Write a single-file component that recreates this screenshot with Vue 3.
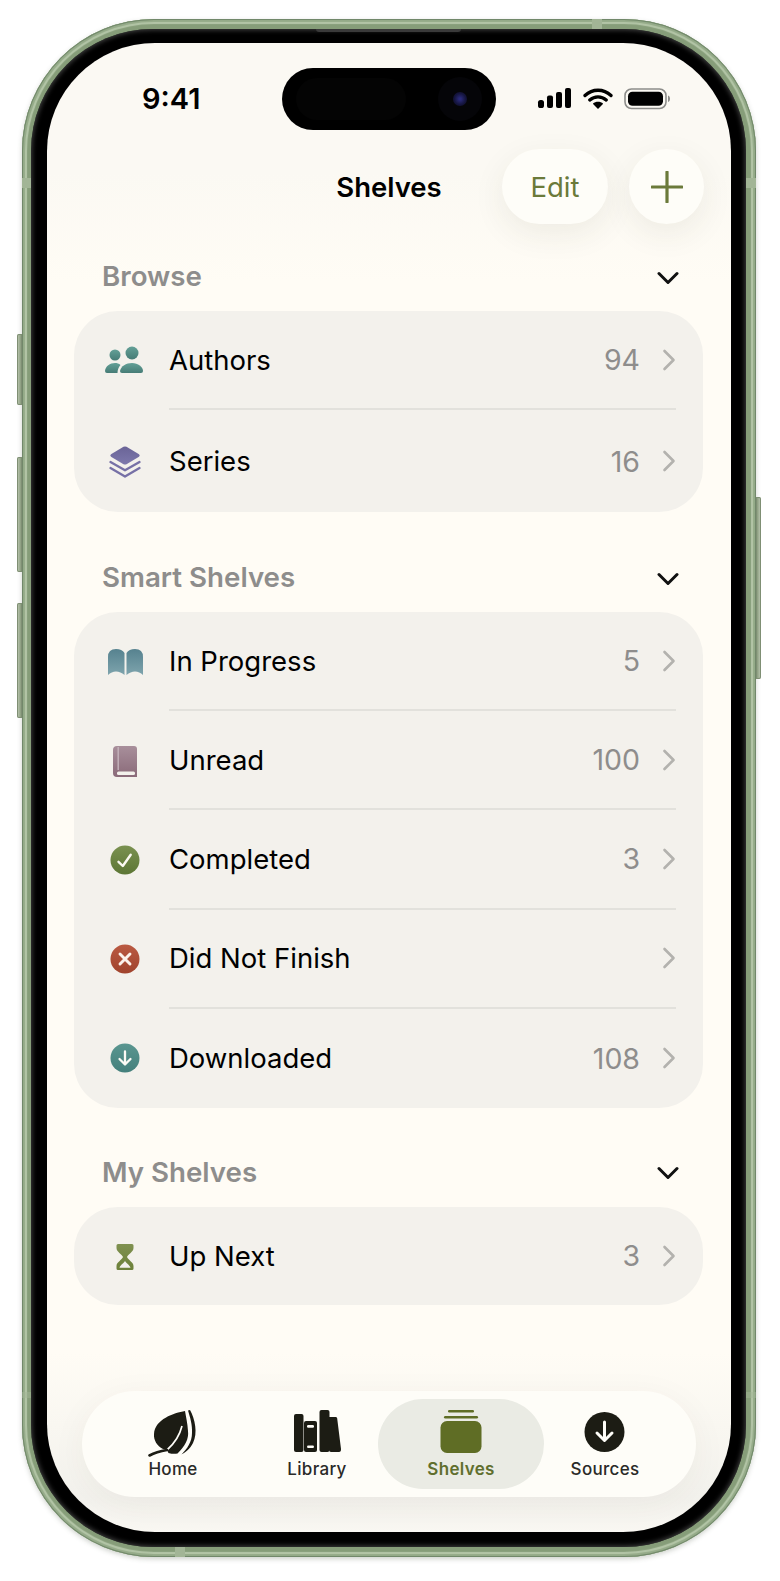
<script setup>
const sections = [
  { title: 'Browse', tall: true, rows: [
    { icon: 'authors', label: 'Authors', count: '94' },
    { icon: 'series', label: 'Series', count: '16' },
  ]},
  { title: 'Smart Shelves', rows: [
    { icon: 'progress', label: 'In Progress', count: '5' },
    { icon: 'unread', label: 'Unread', count: '100' },
    { icon: 'completed', label: 'Completed', count: '3' },
    { icon: 'dnf', label: 'Did Not Finish', count: '' },
    { icon: 'downloaded', label: 'Downloaded', count: '108' },
  ]},
  { title: 'My Shelves', rows: [
    { icon: 'next', label: 'Up Next', count: '3' },
  ]},
]
</script>

<template>
  <div class="page">
    <div class="frame">
      <i class="btn b1"></i><i class="btn b2"></i><i class="btn b3"></i><i class="btn b4"></i>
      <i class="band top"></i><i class="band bot"></i><i class="band lft"></i><i class="band rgt"></i>
      <i class="band lft2"></i><i class="band rgt2"></i>
      <div class="bezel">
        <i class="speaker"></i>
        <div class="screen">
          <svg width="0" height="0" class="defs">
            <defs>
              <linearGradient id="gTeal" x1="0" y1="0" x2="0" y2="1"><stop offset="0" stop-color="#63a097"/><stop offset="1" stop-color="#467c76"/></linearGradient>
              <linearGradient id="gPurple" x1="0" y1="0" x2="0" y2="1"><stop offset="0" stop-color="#6a6497"/><stop offset="1" stop-color="#7d78ac"/></linearGradient>
              <linearGradient id="gBlue" x1="0" y1="0" x2="0" y2="1"><stop offset="0" stop-color="#56828f"/><stop offset="1" stop-color="#7ea4ad"/></linearGradient>
              <linearGradient id="gMauve" x1="0" y1="0" x2="0" y2="1"><stop offset="0" stop-color="#a88f9b"/><stop offset="1" stop-color="#8a6a79"/></linearGradient>
              <linearGradient id="gGreen" x1="0" y1="0" x2="0" y2="1"><stop offset="0" stop-color="#7a9150"/><stop offset="1" stop-color="#5c7635"/></linearGradient>
              <linearGradient id="gRed" x1="0" y1="0" x2="0" y2="1"><stop offset="0" stop-color="#ba5a42"/><stop offset="1" stop-color="#a0432d"/></linearGradient>
              <linearGradient id="gSea" x1="0" y1="0" x2="0" y2="1"><stop offset="0" stop-color="#5a9690"/><stop offset="1" stop-color="#44807c"/></linearGradient>
              <linearGradient id="gOlive" x1="0" y1="0" x2="0" y2="1"><stop offset="0" stop-color="#7f9150"/><stop offset="1" stop-color="#6c8039"/></linearGradient>
            </defs>
          </svg>

          <div class="island">
            <i class="ghost"></i>
            <i class="lens"><i class="pupil"></i></i>
          </div>

          <div class="status">
            <span class="time">9:41</span>
            <div class="indicators">
              <svg width="35" height="22" viewBox="0 0 35 22" fill="#000">
                <rect x="1" y="12" width="6" height="8" rx="2.6"/>
                <rect x="10" y="7.5" width="6" height="12.500" rx="2"/>
                <rect x="19" y="4" width="6" height="16" rx="2"/>
                <rect x="28" y="0" width="6" height="20" rx="2"/>
              </svg>
              <svg width="30" height="22" viewBox="0 0 30 22">
                <path d="M2 7.500C9.500 0.500 20.500 0.500 28 7.500M6.800 12C11.500 7.800 18.500 7.800 23.200 12" fill="none" stroke="#000" stroke-width="3.300" stroke-linecap="round"/>
                <path d="M15 21L9.800 15.800C12.800 13.200 17.200 13.200 20.200 15.800Z" fill="#000"/>
              </svg>
              <svg width="47" height="22" viewBox="0 0 47 22">
                <rect x="1" y="1" width="41" height="19.500" rx="6.500" fill="none" stroke="#8d8d8a" stroke-width="1.600"/>
                <rect x="4" y="3.800" width="35" height="14" rx="4.500" fill="#000"/>
                <path d="M44 7.500C45.500 8 46 9.200 46 10.700S45.500 13.500 44 14Z" fill="#8d8d8a"/>
              </svg>
            </div>
          </div>

          <header class="nav">
            <span></span>
            <h1 class="title">Shelves</h1>
            <div class="actions">
              <button class="pill edit">Edit</button>
              <button class="pill add" aria-label="Add">
                <svg width="32" height="32" viewBox="0 0 32 32"><path d="M16 1V31M1 16H31" stroke="#6b7a3a" stroke-width="3.200" stroke-linecap="round"/></svg>
              </button>
            </div>
          </header>

          <section v-for="s in sections" :key="s.title" class="section">
            <div class="sec-head">
              <h2>{{ s.title }}</h2>
              <svg class="sec-chev" width="22" height="14" viewBox="0 0 22 14"><path d="M2 2.500L11 11.500L20 2.500" fill="none" stroke="#111" stroke-width="3" stroke-linecap="round" stroke-linejoin="round"/></svg>
            </div>
            <div class="card" :class="{ tall: s.tall }">
              <div v-for="r in s.rows" :key="r.label" class="row">
                <svg class="ico" width="46" height="46" viewBox="0 0 46 46">
                  <g v-if="r.icon === 'authors'" fill="url(#gTeal)">
                    <circle cx="13" cy="17" r="5.500"/>
                    <circle cx="30" cy="15" r="6.500"/>
                    <path d="M3 33C3.500 28 8 25 13 25C15 25 17 25.500 18.500 27C16.500 29 15.500 32 15.500 35H5Q3 35 3 33Z"/>
                    <path d="M18 33C19 28 24 25 30 25C36 25 41 29 41 33Q41 35 39 35H20Q18 35 18 33Z"/>
                  </g>
                  <g v-else-if="r.icon === 'series'">
                    <path d="M21.500 8.800Q23 8 24.500 8.800L37 16.300Q38.500 17.500 37 18.700L24.500 26.200Q23 27 21.500 26.200L9 18.700Q7.500 17.500 9 16.300Z" fill="url(#gPurple)"/>
                    <path d="M8.500 24L23 32.300L37.500 24M8.500 30L23 38.500L37.500 30" fill="none" stroke="#7670a6" stroke-width="2.300" stroke-linecap="round" stroke-linejoin="round"/>
                  </g>
                  <g v-else-if="r.icon === 'progress'" fill="url(#gBlue)">
                    <path d="M6 36V18Q6 10 14 10Q20 10 22.500 14V36Q18.500 32.500 14 32.500Q9.500 32.500 6 36Z"/>
                    <path d="M41 36V18Q41 10 33 10Q27 10 24.500 14V36Q28.500 32.500 33 32.500Q37.500 32.500 41 36Z"/>
                  </g>
                  <g v-else-if="r.icon === 'unread'">
                    <path d="M15 8H32Q35 8 35 11V39H15Q11 39 11 35V12Q11 8 15 8Z" fill="url(#gMauve)"/>
                    <rect x="15" y="33.500" width="18" height="3.400" rx="1.500" fill="#f3f1ec"/>
                    <rect x="15.500" y="9" width="1.400" height="23" fill="#c5b3bc"/>
                  </g>
                  <g v-else-if="r.icon === 'completed'">
                    <circle cx="23" cy="23" r="14.500" fill="url(#gGreen)"/>
                    <path d="M16.500 24.800L20.800 29L28.700 17.800" fill="none" stroke="#fbf9f2" stroke-width="2.400" stroke-linecap="round" stroke-linejoin="round"/>
                  </g>
                  <g v-else-if="r.icon === 'dnf'">
                    <circle cx="23" cy="23" r="14.500" fill="url(#gRed)"/>
                    <path d="M18 18L28 28M28 18L18 28" fill="none" stroke="#fbf2ec" stroke-width="2.900" stroke-linecap="round"/>
                  </g>
                  <g v-else-if="r.icon === 'downloaded'">
                    <circle cx="23" cy="23" r="14.500" fill="url(#gSea)"/>
                    <path d="M23 16.500V29M17.500 24L23 29.500L28.500 24" fill="none" stroke="#fbfaf5" stroke-width="2.300" stroke-linecap="round" stroke-linejoin="round"/>
                  </g>
                  <g v-else-if="r.icon === 'next'">
                    <path d="M16 11H30Q31.500 11 31.500 12.500V15C31.500 19 26 21 25 24C26 27 31.500 29 31.500 33V35.500Q31.500 37 30 37H16Q14.500 37 14.500 35.500V33C14.500 29 20 27 21 24C20 21 14.500 19 14.500 15V12.500Q14.500 11 16 11Z" fill="url(#gOlive)"/>
                    <path d="M17.500 34.800C18.500 31.500 22 30.500 23 27.800C24 30.500 27.500 31.500 28.500 34.800Z" fill="#f3f1ec"/>
                  </g>
                </svg>
                <div class="row-main">
                  <span class="label">{{ r.label }}</span>
                  <span class="count">{{ r.count }}</span>
                  <svg class="chev" width="14" height="22" viewBox="0 0 14 22"><path d="M2.500 2L11.500 11L2.500 20" fill="none" stroke="#b3b2ae" stroke-width="2.600" stroke-linecap="round" stroke-linejoin="round"/></svg>
                </div>
              </div>
            </div>
          </section>

          <nav class="tabbar">
            <div class="tab">
              <svg width="50" height="48" viewBox="0 0 50 48">
                <path d="M37 2C26 4 7 10 6 25C5.500 31 9 37 15 40L19 41L20.500 44C24 45 27 45 29.500 44.500C37 37 41 30 40 22C39.500 14 38 8 37 2Z" fill="#1c1c14"/>
                <path d="M34 17C32 25 27 34 19 41" fill="none" stroke="#fefdf8" stroke-width="1.700"/>
                <path d="M19 41C13 42 7 43.500 1.500 46.500" fill="none" stroke="#1c1c14" stroke-width="2.600" stroke-linecap="round"/>
                <path d="M42 1C47 10 50 24 45 34C42 40 38 43 33.500 45.500C39 40 44 33 44 24C44.500 16 42 8 40 1.500Z" fill="#1c1c14"/>
              </svg>
              <span>Home</span>
            </div>
            <div class="tab">
              <svg width="50" height="48" viewBox="0 0 50 48" fill="#1c1c14">
                <rect x="2" y="5" width="9.500" height="38" rx="2"/>
                <path d="M14 12H23Q25 12 25 14V41Q25 43 23 43H14Q12 43 12 41V14Q12 12 14 12Z"/>
                <rect x="15" y="16" width="7" height="2.800" rx="1.200" fill="#fefdf8"/>
                <rect x="15" y="36.500" width="7" height="2.400" rx="1.200" fill="#fefdf8"/>
                <rect x="27.500" y="1" width="10" height="42" rx="2"/>
                <path d="M37 8H44Q45 8 45.200 9.500L49 40Q49.200 43 47 43H39Q37 43 37 41Z"/>
              </svg>
              <span>Library</span>
            </div>
            <div class="tab active">
              <svg width="50" height="48" viewBox="0 0 50 48" fill="#5f6d25">
                <rect x="12" y="1" width="26" height="2.400" rx="1.200"/>
                <rect x="8" y="7" width="34" height="2.600" rx="1.300"/>
                <rect x="4.500" y="12" width="41" height="32" rx="6.500"/>
              </svg>
              <span>Shelves</span>
            </div>
            <div class="tab">
              <svg width="50" height="48" viewBox="0 0 50 48">
                <circle cx="24.500" cy="23" r="20" fill="#1c1c14"/>
                <path d="M24.500 13V31M17 24L24.500 31.500L32 24" fill="none" stroke="#fefdf8" stroke-width="3" stroke-linecap="round" stroke-linejoin="round"/>
              </svg>
              <span>Sources</span>
            </div>
          </nav>
        </div>
      </div>
    </div>
  </div>
</template>

<style>
html, body { margin: 0; background: #fff; }
</style>

<style scoped>
.page {
  width: 780px;
  height: 1581px;
  padding: 19px 0 0 22px;
  box-sizing: border-box;
  overflow: hidden;
  font-family: Inter, "Liberation Sans", sans-serif;
}
.frame {
  position: relative;
  width: 734px;
  height: 1538px;
  box-sizing: border-box;
  padding: 10px 10px 10px 9px;
  border-radius: 132px;
  background: #869d79;
  box-shadow:
    inset 0 0 0 1px #71886a,
    inset 0 0 1px 3px #94aa88,
    inset 0 0 1px 5px #b5c7a9,
    0 2px 5px rgba(60, 70, 50, .25);
}
.btn {
  position: absolute;
  width: 5px;
  background: linear-gradient(to right, #c3ccb8, #7c9170);
  border-radius: 2px 0 0 2px;
  box-shadow: inset 0 0 0 1px #7f8f74;
}
.b1 { left: -5px; top: 315px; height: 71px; }
.b2 { left: -5px; top: 438px; height: 115px; }
.b3 { left: -5px; top: 584px; height: 115px; }
.b4 {
  left: auto; right: -5px; top: 478px; height: 182px;
  border-radius: 0 2px 2px 0;
  background: linear-gradient(to left, #c3ccb8, #7c9170);
}
.band { position: absolute; background: #a2b596; }
.band.top { left: 570px; top: 0; width: 10px; height: 10px; }
.band.bot { left: 153px; bottom: 0; width: 10px; height: 10px; }
.band.lft { left: 0; top: 159px; width: 9px; height: 10px; }
.band.rgt { right: 0; top: 159px; width: 10px; height: 10px; }
.band.lft2 { left: 0; top: 1373px; width: 9px; height: 6px; opacity: .5; }
.band.rgt2 { right: 0; top: 1373px; width: 10px; height: 6px; opacity: .5; }
.bezel {
  position: relative;
  height: 100%;
  box-sizing: border-box;
  padding: 14px 15px 15px 16px;
  border-radius: 122px;
  background: #000;
  box-shadow: inset 0 0 5px 1px #444;
}
.speaker {
  position: absolute;
  left: 285px;
  top: 0;
  width: 145px;
  height: 3px;
  background: #3a3a3a;
  border-radius: 0 0 3px 3px;
}
.screen {
  position: relative;
  height: 100%;
  display: flex;
  flex-direction: column;
  overflow: hidden;
  border-radius: 108px;
  background:
    linear-gradient(to bottom, rgba(244, 243, 238, 0) 1310px, #f3f2ed 1455px, #faf8f3 1489px),
    linear-gradient(to bottom, #fbf9f3 130px, #fffcf5 240px);
}
.defs { position: absolute; }
.island {
  position: absolute;
  left: 235px;
  top: 24.500px;
  width: 214px;
  height: 62.500px;
  border-radius: 32px;
  background: #000;
}
.ghost {
  position: absolute;
  left: 14px;
  top: 10px;
  width: 110px;
  height: 42px;
  border-radius: 21px;
  background: #040404;
}
.lens {
  position: absolute;
  left: 156px;
  top: 9px;
  width: 44px;
  height: 44px;
  border-radius: 50%;
  background: #050508;
}
.pupil {
  position: absolute;
  left: 15px;
  top: 15px;
  width: 14px;
  height: 14px;
  border-radius: 50%;
  background: radial-gradient(circle, #2a2a78 10%, #15153f 55%, #0a0a1a 100%);
}
.status {
  height: 106px;
  box-sizing: border-box;
  padding: 41px 60px 0 95px;
  display: flex;
  justify-content: space-between;
  align-items: flex-start;
}
.time {
  font-size: 29px;
  line-height: 30px;
  font-weight: 600;
  color: #000;
}
.indicators { display: flex; align-items: center; gap: 11px; margin-top: 4px; }
.nav {
  height: 75px;
  padding: 0 27px;
  display: grid;
  grid-template-columns: 1fr auto 1fr;
  align-items: center;
}
.title {
  margin: 0;
  font-size: 27.500px;
  font-weight: 600;
  color: #000;
}
.actions { display: flex; justify-content: flex-end; gap: 21px; }
.pill {
  height: 75px;
  border: 0;
  padding: 0;
  border-radius: 38px;
  background: #fefdf8;
  box-shadow: 0 10px 32px rgba(70, 60, 40, .08);
  display: flex;
  align-items: center;
  justify-content: center;
  font-family: inherit;
}
.edit { width: 106px; font-size: 27.500px; font-weight: 400; color: #6b7a3a; }
.add { width: 75px; }
.section { padding: 0 28px 0 27px; margin-top: 45px; }
.nav + .section { margin-top: 32px; }
.section:last-of-type { margin-top: 44px; }
.sec-head {
  height: 40px;
  margin-bottom: 15px;
  padding: 0 24px 0 28px;
  display: flex;
  align-items: center;
  justify-content: space-between;
}
.sec-head h2 {
  margin: 0;
  font-size: 27.700px;
  font-weight: 600;
  color: #8e8d8c;
}
.sec-chev { margin-top: 3px; }
.card {
  border-radius: 44px;
  background: #f3f1ec;
}
.row {
  height: 99.200px;
  padding: 0 27px 0 28px;
  display: flex;
  align-items: center;
  gap: 21px;
}
.tall .row:first-child { height: 99px; }
.tall .row:last-child { height: 102px; }
.section:last-of-type .row { height: 98px; }
.ico { flex: none; }
.row-main {
  flex: 1;
  height: 100%;
  display: flex;
  align-items: center;
  border-bottom: 2px solid #e2e1dc;
  box-sizing: border-box;
}
.row:last-child .row-main { border-bottom: 0; }
.label { flex: 1; font-size: 27.500px; color: #000; }
.count {
  font-size: 28.500px;
  color: #8e8d8c;
  margin-right: 22px;
}
.chev { flex: none; }
.tabbar {
  position: absolute;
  left: 35px;
  right: 35px;
  bottom: 35px;
  height: 106px;
  box-sizing: border-box;
  padding: 0 18px 0 19px;
  border-radius: 53px;
  background: #fefdf8;
  display: grid;
  grid-template-columns: repeat(4, 144px);
  align-items: center;
  box-shadow: 0 8px 36px rgba(70, 60, 40, .05);
}
.tab {
  position: relative;
  display: flex;
  flex-direction: column;
  align-items: center;
  gap: 1px;
  font-size: 17px;
  font-weight: 500;
  line-height: 22px;
  color: #2a2a28;
  letter-spacing: .3px;
}
.tab svg, .tab span { position: relative; }
.tab.active { color: #606f2e; font-weight: 600; }
.tab.active::before {
  content: "";
  position: absolute;
  left: -11px;
  right: -11px;
  top: -10px;
  bottom: -9px;
  border-radius: 46px;
  background: #eaebe4;
}
</style>
